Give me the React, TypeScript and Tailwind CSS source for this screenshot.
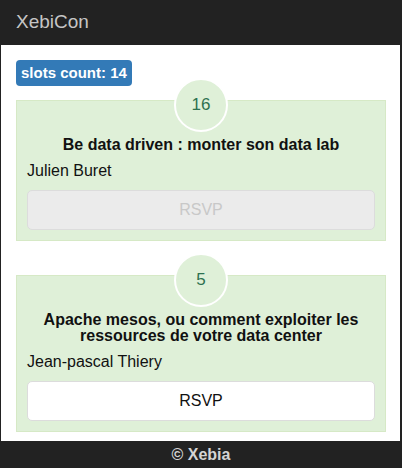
import React from "react";

type Slot = { n: number; title: React.ReactNode; speaker: string; disabled: boolean };

const slots: Slot[] = [
  { n: 16, title: "Be data driven : monter son data lab", speaker: "Julien Buret", disabled: true },
  {
    n: 5,
    title: (
      <>
        Apache mesos, ou comment exploiter les
        <br />
        ressources de votre data center
      </>
    ),
    speaker: "Jean-pascal Thiery",
    disabled: false,
  },
];

function Card({ slot, first }: { slot: Slot; first: boolean }) {
  return (
    <div
      className={`flex flex-col bg-[#dff0d8] border border-[#d6e9c6] px-[10px] pb-[10px] ${
        first ? "mt-[14px]" : "mt-[34px]"
      }`}
    >
      <div className="self-center -mt-[23px] w-[54px] h-[54px] rounded-full border-2 border-white bg-[#dff0d8] text-[#2e7150] text-[17px] flex items-center justify-center">
        {slot.n}
      </div>
      <div className="mt-[5px] text-center font-bold text-[16px] leading-[16px] text-[#111]">
        {slot.title}
      </div>
      <div className="mt-[8px] text-[16px] leading-[20px] text-[#111]">{slot.speaker}</div>
      <button
        disabled={slot.disabled}
        className={`mt-[9px] h-[40px] w-full rounded-[5px] border border-[#dcdcdc] text-[16px] ${
          slot.disabled ? "bg-[#ebebeb] text-[#c8c8c8]" : "bg-white text-[#111]"
        }`}
      >
        RSVP
      </button>
    </div>
  );
}

export default function App() {
  return (
    <div
      className="w-[402px] h-[468px] flex flex-col overflow-hidden"
      style={{ fontFamily: '"Liberation Sans", Arial, sans-serif' }}
    >
      <div className="h-[45px] shrink-0 bg-[#222] flex items-center px-[16px] text-[19px] text-[#c6c6c6]">
        XebiCon
      </div>
      <div className="flex-1 min-h-0 overflow-hidden bg-white border-l border-r-2 border-[#222] pl-[15px] pr-[14px] pt-[15px]">
        <div className="inline-flex items-center h-[26px] px-[5px] rounded-[4px] bg-[#337ab7] text-white font-bold text-[15px]">
          slots count: 14
        </div>
        {slots.map((s, i) => (
          <Card key={i} slot={s} first={i === 0} />
        ))}
      </div>
      <div className="h-[27px] shrink-0 bg-[#222] flex items-center justify-center font-bold text-[16px] text-[#d4d4d4]">
        © Xebia
      </div>
    </div>
  );
}
